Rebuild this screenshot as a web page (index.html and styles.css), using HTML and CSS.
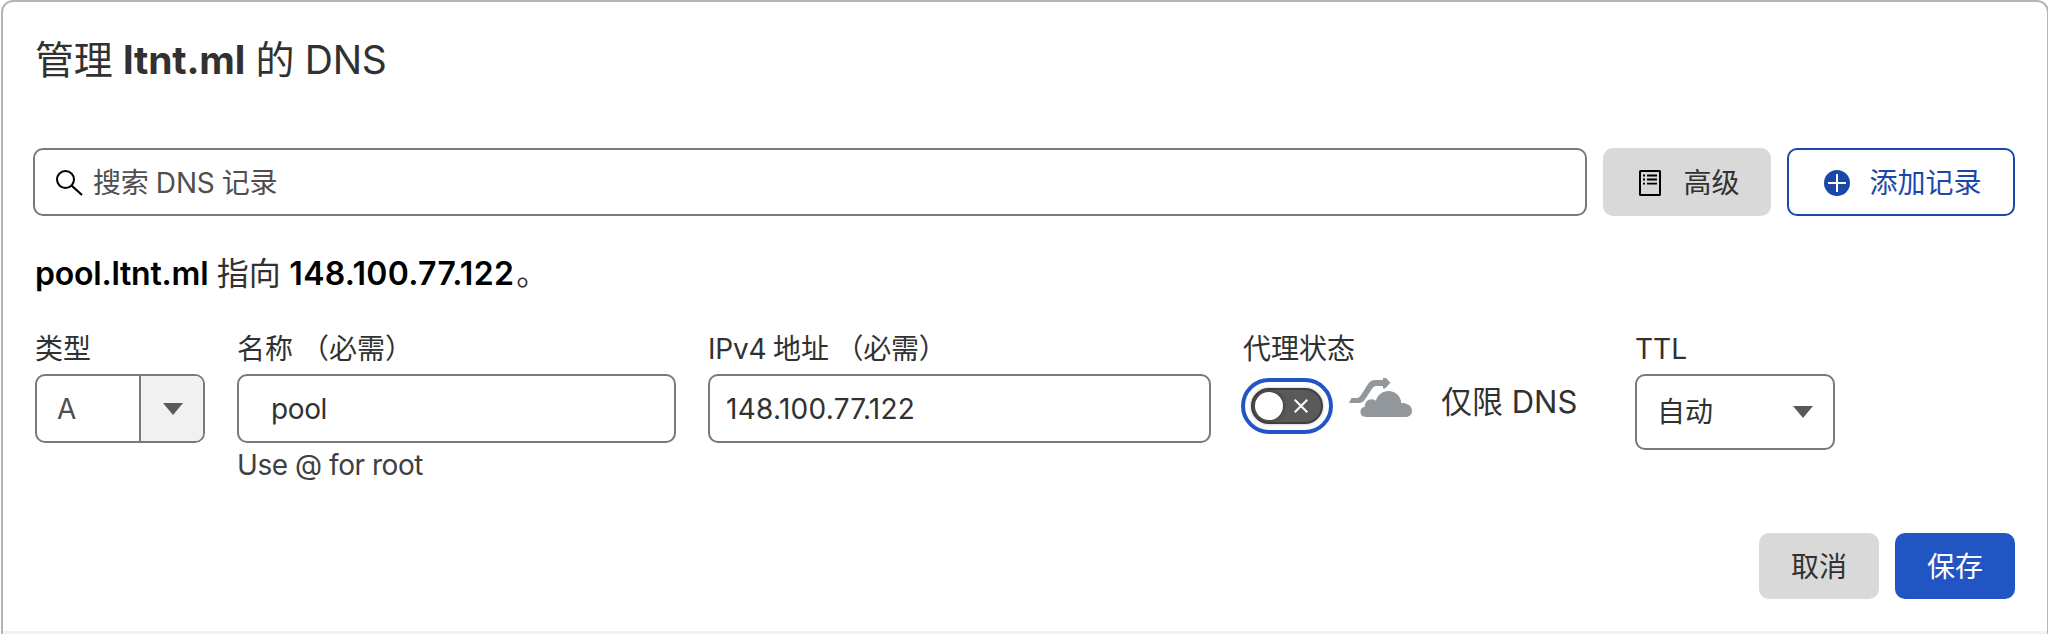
FILE: index.html
```html
<!DOCTYPE html>
<html lang="zh-CN">
<head>
<meta charset="utf-8">
<title>DNS</title>
<link rel="stylesheet" href="styles.css">
</head>
<body>
<main class="card">
  <h1 class="title">管理 <b>ltnt.ml</b> 的 DNS</h1>
  <div class="toolbar">
    <div class="search">
      <svg class="search-icon" width="28" height="28" viewBox="0 0 28 28" fill="none" stroke="#000"><circle cx="10.5" cy="10.5" r="8.5" stroke-width="2"/><path d="M16.5 16.5L27 26" stroke-width="2.2"/></svg>
      <span class="search-text">搜索 DNS 记录</span>
    </div>
    <div class="btn btn-gray btn-advanced">
      <svg width="22" height="26" viewBox="0 0 22 26"><rect x="1" y="1" width="20" height="24" rx=".5" fill="none" stroke="#000" stroke-width="2"/><path d="M8 5.500h10M8 9.500h10M8 13.700h10M4 5.500h2M4 9.500h2M4 13.700h2" stroke="#000" stroke-width="1.800"/></svg>
      <span>高级</span>
    </div>
    <div class="btn btn-add">
      <svg width="26" height="26" viewBox="0 0 26 26"><circle cx="13" cy="13" r="13" fill="#1b48a8"/><path d="M13 4v18M4 13h18" stroke="#fff" stroke-width="2"/></svg>
      <span>添加记录</span>
    </div>
  </div>
  <p class="summary"><b class="host">pool.ltnt.ml</b> 指向 <b class="address">148.100.77.122</b>。</p>
  <div class="form">
    <div class="field field-type">
      <div class="label">类型</div>
      <div class="box combo">
        <span class="combo-value">A</span>
        <span class="combo-toggle"><svg width="20" height="12" viewBox="0 0 20 12"><path d="M0 0h20L10 12z" fill="#595959"/></svg></span>
      </div>
    </div>
    <div class="field field-name">
      <div class="label">名称 （必需）</div>
      <div class="box box-name">pool</div>
      <div class="hint">Use @ for root</div>
    </div>
    <div class="field field-ip">
      <div class="label label-ip">IPv4 地址 （必需）</div>
      <div class="box box-ip">148.100.77.122</div>
    </div>
    <div class="field field-proxy">
      <div class="label">代理状态</div>
      <div class="proxy">
        <div class="toggle"><div class="track"><span class="knob"></span><svg width="14" height="14" viewBox="0 0 14 14"><path d="M.7 .7l12.600 12.600M13.300 .7L.7 13.300" stroke="#fff" stroke-width="2"/></svg></div></div>
        <svg class="cloud" width="64" height="40" viewBox="0 0 64 40" fill="#92979b"><path d="M0 25L2.500 20H7.500C10 20 11.500 18 13 15.500L18 7.500C20.500 3.800 22.500 2 26.500 2H34V0H37L41.500 4.800L36 10.500H34V8H27.500C25.500 8 24 9 22.800 11L17 20C14.500 23.800 12.500 25 9.500 25Z"/><path d="M17 39C13.500 39 11.500 37 11.500 33.800C11.500 31 13.200 29 16 28.500C15.500 24.500 18.500 21.300 22.500 21.300C24.300 21.300 25.500 21.800 26.800 22.800C28.500 16.800 33.500 13 39.500 13C46.500 13 52 18.300 52.400 25.400C53.800 24.900 55 25 56.300 25.400C60.500 26.300 63 29 63 32.700C63 36.500 60.500 39 56.500 39Z"/></svg>
        <span class="proxy-text">仅限 DNS</span>
      </div>
    </div>
    <div class="field field-ttl">
      <div class="label">TTL</div>
      <div class="box box-ttl"><span>自动</span><svg width="20" height="12" viewBox="0 0 20 12"><path d="M0 0h20L10 12z" fill="#595959"/></svg></div>
    </div>
  </div>
  <div class="actions">
    <div class="btn btn-gray">取消</div>
    <div class="btn btn-save">保存</div>
  </div>
  <div class="divider"></div>
</main>
</body>
</html>
```
FILE: styles.css
```css
* { box-sizing: border-box; }
body {
  margin: 0;
  width: 2048px;
  height: 634px;
  overflow: hidden;
  background: #fff;
  color: #313131;
  font: 28px/36px Inter, "Noto Sans CJK SC", sans-serif;
  white-space: nowrap;
}
.card {
  width: 2048px;
  height: 654px;
  margin-left: 1px;
  border: 2px solid #b3b5b8;
  border-radius: 12px;
  background: #fff;
}
.title {
  margin: 34px 0 0 32px;
  height: 48px;
  font-size: 39px;
  line-height: 48px;
  font-weight: 400;
  letter-spacing: -.15px;
  word-spacing: -.5px;
}
.title b { font-weight: 700; }
.toolbar {
  display: flex;
  gap: 16px;
  margin: 64px 0 0 30px;
  height: 68px;
}
.search {
  display: flex;
  align-items: center;
  width: 1554px;
  padding-left: 20px;
  gap: 10px;
  border: 2px solid #797979;
  border-radius: 10px;
  color: #4f4f4f;
}
.search-icon { margin-top: 2px; }
.search-text { padding-top: 1px; letter-spacing: -.15px; word-spacing: -.6px; }
.btn {
  display: flex;
  align-items: center;
  justify-content: center;
  width: 120px;
  height: 66px;
  padding-top: 2px;
  border-radius: 10px;
}
.btn-gray { background: #d9d9d9; }
.btn-advanced { width: 168px; height: 68px; padding-left: 5px; gap: 22px; }
.btn-add {
  width: 228px;
  height: 68px;
  padding-left: 4px;
  gap: 19px;
  border: 2px solid #1b48a8;
  color: #1b48a8;
}
.btn-save { background: #2255c4; color: #fff; }
.summary {
  margin: 38px 0 0 32px;
  height: 40px;
  font-size: 32px;
  line-height: 40px;
  word-spacing: -.5px;
}
.summary b { font-weight: 600; color: #000; }
.summary .host { letter-spacing: -.22px; }
.summary .address { letter-spacing: .3px; margin-right: 2px; }
.form {
  display: flex;
  gap: 32px;
  margin: 36px 0 0 32px;
  height: 143px;
}
.label { height: 44px; padding-top: 1px; }
.label-ip { letter-spacing: -.2px; word-spacing: -1px; }
.box {
  display: flex;
  align-items: center;
  height: 69px;
  border: 2px solid #797979;
  border-radius: 10px;
}
.field-type { width: 170px; }
.field-name { width: 439px; }
.field-ip { width: 503px; }
.field-proxy { width: 360px; }
.field-ttl { width: 200px; }
.combo { overflow: hidden; }
.combo-value { width: 102px; padding-left: 20px; color: #4f4f4f; }
.combo-toggle {
  flex: 1;
  height: 100%;
  display: flex;
  align-items: center;
  justify-content: center;
  padding-left: 1px;
  border-left: 2px solid #797979;
  background: #f1f1f1;
}
.box-name { padding-left: 32px; letter-spacing: -.4px; }
.box-ip { padding-left: 16px; letter-spacing: .27px; }
.hint { margin-top: 4px; color: #404040; letter-spacing: -.45px; }
.proxy { display: flex; align-items: flex-start; padding-top: 4px; }
.toggle {
  width: 92px;
  height: 56px;
  margin-left: -2px;
  padding: 6px;
  border: 4px solid #2255c4;
  border-radius: 28px;
}
.track {
  display: flex;
  align-items: center;
  height: 36px;
  padding-left: 2px;
  gap: 11px;
  border: 2px solid #404040;
  border-radius: 18px;
  background: #595959;
  box-shadow: 0 0 3px rgba(0, 0, 0, .3);
}
.knob { width: 28px; height: 28px; border-radius: 50%; background: #fff; box-shadow: 0 0 4px rgba(0, 0, 0, .5); }
.cloud { margin-left: 16px; }
.proxy-text { margin: 6px 0 0 28px; font-size: 31px; }
.box-ttl { justify-content: space-between; height: 76px; padding: 0 20px; }
.actions { display: flex; justify-content: flex-end; gap: 16px; margin: 60px 32px 0 0; }
.divider { height: 20px; margin-top: 32px; background: #f1f1f1; }
```
